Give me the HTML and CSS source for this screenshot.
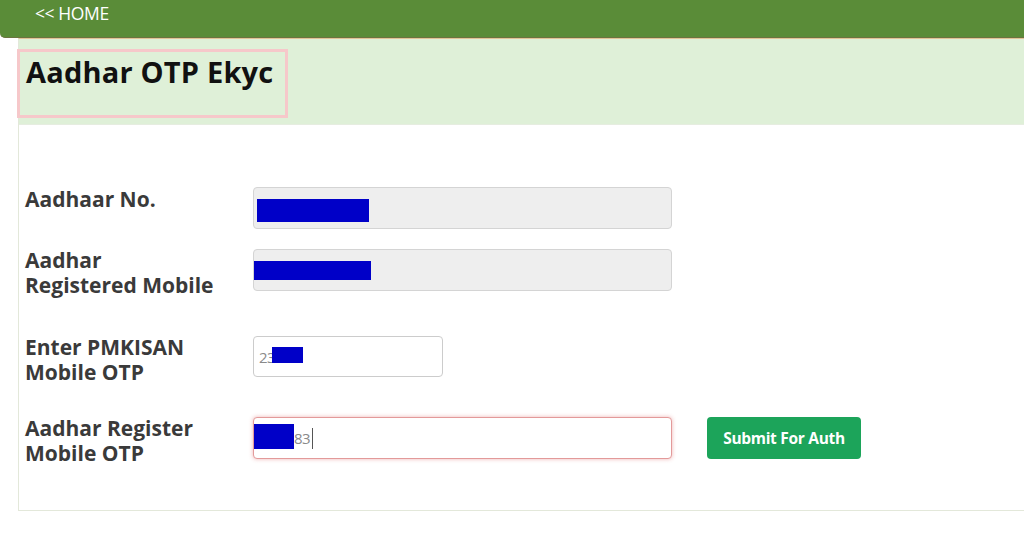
FILE: index.html
```html
<!DOCTYPE html>
<html lang="en">
<head>
<meta charset="utf-8">
<title>Aadhar OTP Ekyc</title>
<link rel="stylesheet" href="styles.css">
</head>
<body>
<div class="topbar"><a class="home" href="#">&lt;&lt; HOME</a></div>
<div class="panel">
  <div class="panel-heading">
    <div class="title-box"><h1 class="title">Aadhar OTP Ekyc</h1></div>
  </div>
  <div class="panel-body">
    <div class="form-row row-1">
      <label class="label">Aadhaar No.</label>
      <div class="field field-wide field-readonly">
        <span class="redact redact-1"></span>
      </div>
    </div>
    <div class="form-row row-2">
      <label class="label">Aadhar<br>Registered Mobile</label>
      <div class="field field-wide field-readonly">
        <span class="redact redact-2"></span>
      </div>
    </div>
    <div class="form-row row-3">
      <label class="label">Enter PMKISAN<br>Mobile OTP</label>
      <div class="field field-short">
        <span class="value">23</span><span class="redact redact-3"></span>
      </div>
    </div>
    <div class="form-row row-4">
      <label class="label">Aadhar Register<br>Mobile OTP</label>
      <div class="field field-wide field-error">
        <span class="redact redact-4"></span><span class="value">83</span><span class="caret"></span>
      </div>
      <button class="btn-submit" type="button">Submit For Auth</button>
    </div>
  </div>
</div>
</body>
</html>
```

FILE: styles.css
```css
html, body {
  margin: 0;
  padding: 0;
  background: #ffffff;
  overflow: hidden;
}

body {
  font-family: "Open Sans", "Noto Sans", "Liberation Sans", sans-serif;
  color: #333333;
  width: 1024px;
  height: 536px;
}

.topbar {
  background: #5a8c38;
  border-bottom: 1px solid #6b7440;
  border-bottom-left-radius: 5px;
  padding-left: 35px;
  padding-bottom: 11px;
  display: flex;
  align-items: center;
  box-sizing: border-box;
  height: 38px;
}

.home {
  color: #ffffff;
  text-decoration: none;
  font-size: 17.5px;
  line-height: 20px;
  letter-spacing: -0.4px;
}

.panel {
  margin-left: 18px;
  width: 1020px;
  border-top: 1px solid #e2c497;
  border-left: 1px solid #e3e8da;
  border-bottom: 1px solid #e3e8da;
}

.panel-heading {
  background: #dff0d8;
  height: 86px;
  padding-top: 10px;
  box-sizing: border-box;
  border-bottom: 1px solid #e6ede0;
}

.title-box {
  margin-left: -2px;
  width: 271px;
  height: 69px;
  box-sizing: border-box;
  border: 3px solid #f6c8ca;
  padding-left: 6px;
}

.title {
  margin: 0;
  font-size: 29px;
  line-height: 39px;
  font-weight: 700;
  color: #111111;
  letter-spacing: 0.2px;
}

.panel-body {
  padding: 61px 0 44px 6px;
}

.form-row {
  display: flex;
  align-items: flex-start;
}

.row-1 { margin-bottom: 18px; }
.row-2 { margin-bottom: 36px; }
.row-3 { margin-bottom: 30px; }

.label {
  width: 228px;
  flex: none;
  font-size: 21px;
  line-height: 25px;
  font-weight: 700;
  color: #3a3a3a;
  letter-spacing: 0;
  padding-top: 1px;
}

.field {
  margin-top: 2px;
  height: 42px;
  box-sizing: border-box;
  border: 1px solid #cccccc;
  border-radius: 4px;
  background: #ffffff;
  display: flex;
  align-items: center;
  padding-left: 0;
}

.row-1 .field { margin-top: 1px; }

.field-wide { width: 419px; }
.field-short { width: 190px; height: 41px; padding-left: 5px; }

.field-readonly {
  background: #eeeeee;
  border-color: #d4d4d4;
}

.field-error {
  border-color: #e39a9a;
  box-shadow: 0 0 4px rgba(220, 90, 90, 0.45);
}

.redact {
  display: inline-block;
  background: #0000c8;
  flex: none;
}

.redact-1 { width: 112px; height: 23px; margin-left: 3px; margin-top: 5px; }
.redact-2 { width: 117px; height: 19px; margin-left: 0; }
.redact-3 { width: 31px; height: 16px; margin-left: -3px; margin-top: -4px; }
.redact-4 { width: 40px; height: 25px; margin-left: 0; margin-top: -3px; }

.value {
  font-size: 15px;
  color: #8a8a8a;
  line-height: 20px;
  letter-spacing: -0.5px;
}

.caret {
  display: inline-block;
  width: 1px;
  height: 21px;
  background: #555555;
  margin-left: 2px;
}

.btn-submit {
  margin-top: 2px;
  margin-left: 35px;
  width: 154px;
  height: 42px;
  border: none;
  border-radius: 4px;
  background: #1ca45a;
  color: #ffffff;
  font-family: "Open Sans", "Noto Sans", "Liberation Sans", sans-serif;
  font-size: 15.5px;
  font-weight: 700;
  letter-spacing: -0.3px;
  padding: 0;
}
```
